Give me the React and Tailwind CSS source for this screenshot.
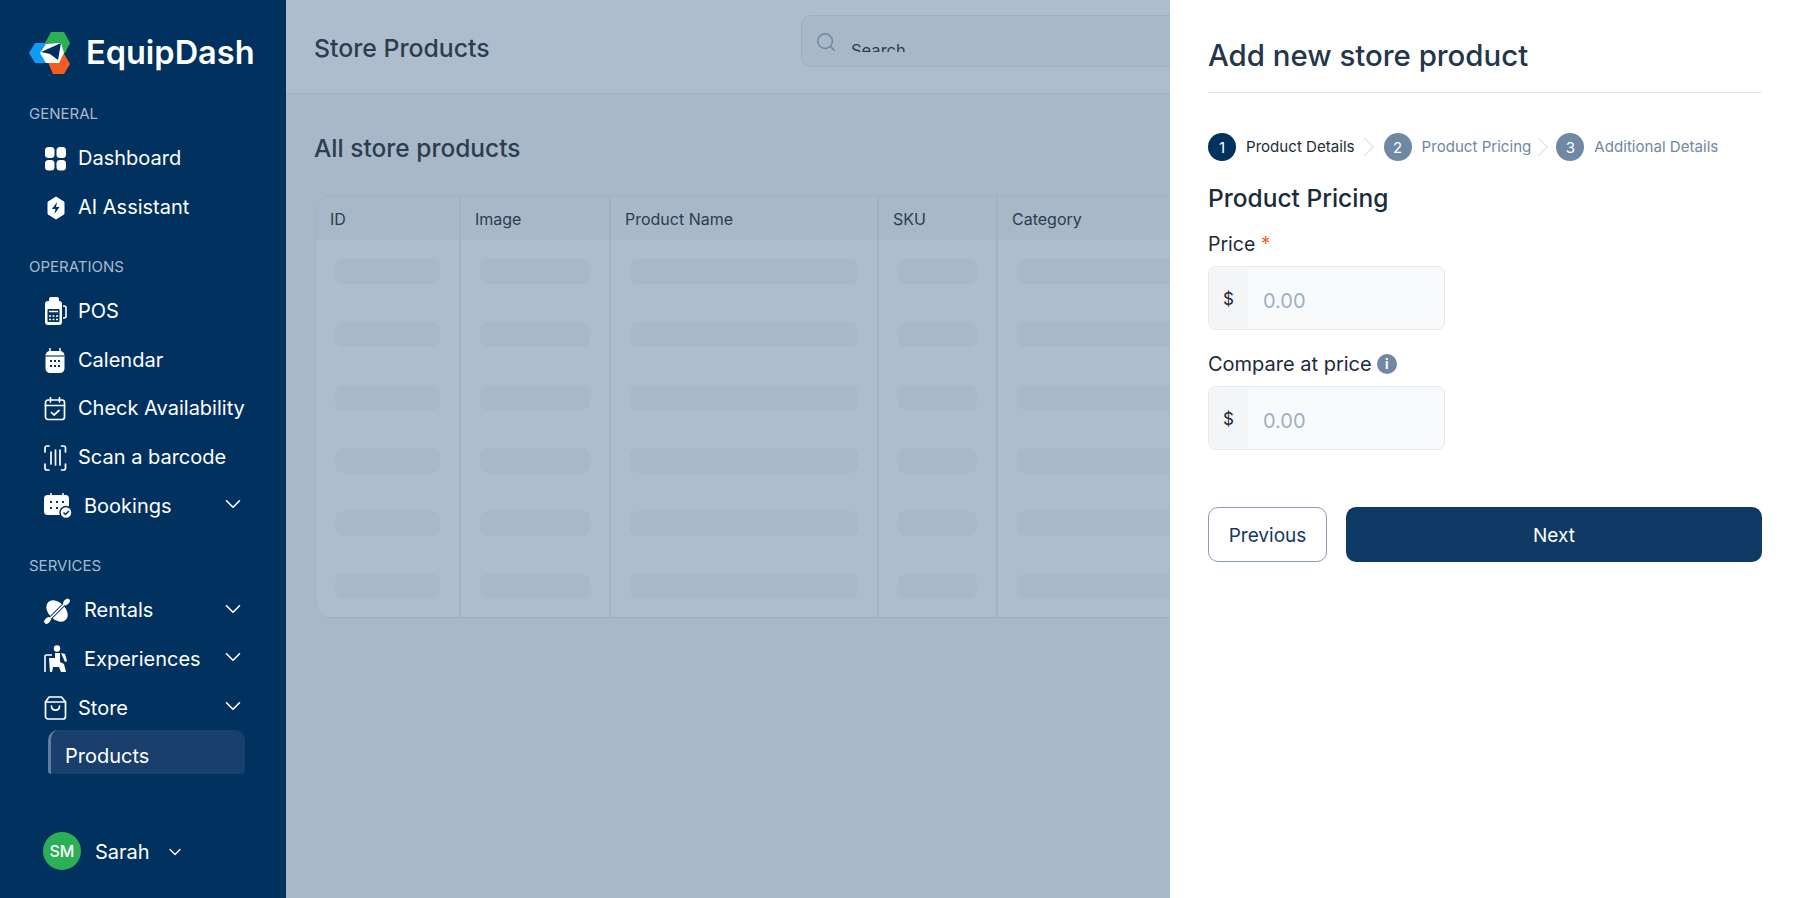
import React from "react";
import { ChevronDown, ChevronRight, Search } from "lucide-react";

const COLS = "grid grid-cols-[145px_150px_268px_119px_320px]";
const HEADERS = ["ID", "Image", "Product Name", "SKU", "Category"];
const ROWS = [1, 2, 3, 4, 5, 6];

const Logo = () => (
  <svg width="42" height="42" viewBox="0 0 42 42">
    <polygon points="0,21 6,11 18,11 18,31 6,31" fill="#0d9cf5" />
    <polygon points="16,11 22,0 35,0 41,11 36,21 20,24" fill="#2bb055" />
    <polygon points="18,28 34,20 41,32 35,42 24,42" fill="#f75c23" />
    <polygon points="11,21 17,12 32,11 35,21 30,31 17,31" fill="#fff" />
    <polygon points="12,20 32,11 29,28 21,22" fill="#00315f" />
  </svg>
);

const DashboardIcon = () => (
  <svg width="24" height="24" viewBox="0 0 24 24" fill="#fff">
    <rect x="1" y="0" width="9.5" height="11" rx="3.5" />
    <rect x="12.5" y="0" width="9.5" height="11" rx="3.5" />
    <rect x="1" y="13" width="9.5" height="10.5" rx="3.5" />
    <rect x="12.5" y="13" width="9.5" height="10.5" rx="3.5" />
  </svg>
);

const AiIcon = () => (
  <svg width="24" height="24" viewBox="0 0 24 24">
    <polygon points="12,1 20,6 20,18 12,23 4,18 4,6" fill="#fff" stroke="#fff" strokeLinejoin="round" />
    <polygon points="13,6 8,13 11.5,13 10.5,18 15.5,11 12,11" fill="#00315f" />
  </svg>
);

const PosIcon = () => (
  <svg width="24" height="30" viewBox="0 0 24 30">
    <rect x="5" y="0" width="10" height="6" rx="2" fill="#fff" />
    <rect x="1" y="4" width="17" height="24" rx="3" fill="#fff" />
    <path d="M19 9h1a2 2 0 0 1 2 2v8a2 2 0 0 1-2 2h-1" fill="none" stroke="#fff" strokeWidth="1.6" />
    <rect x="3.5" y="12" width="12" height="13" rx="1" fill="#00315f" />
    <path d="M5 19h2M8.5 19h2M12 19h2M5 22.5h2M8.5 22.5h2M12 22.5h2M5 14.5h9" stroke="#fff" strokeWidth="1.3" />
  </svg>
);

const CalendarIcon = () => (
  <svg width="24" height="26" viewBox="0 0 24 26">
    <path d="M6 0.5v4M16 0.5v4" stroke="#fff" strokeWidth="1.5" strokeLinecap="round" />
    <path d="M6 3h10a4.5 4.5 0 0 1 4.5 4.5v13a4.5 4.5 0 0 1-4.5 4.5H6a4.5 4.5 0 0 1-4.5-4.5v-13A4.5 4.5 0 0 1 6 3z" fill="#fff" />
    <path d="M1.5 8h19" stroke="#00315f" strokeWidth="1.1" />
    <g fill="#00315f">
      <rect x="6" y="12" width="2" height="2" /><rect x="10" y="12" width="2" height="2" /><rect x="14" y="12" width="2" height="2" />
      <rect x="6" y="17" width="2" height="2" /><rect x="10" y="17" width="2" height="2" /><rect x="14" y="17" width="2" height="2" />
    </g>
  </svg>
);

const CheckIcon = () => (
  <svg width="24" height="24" viewBox="0 0 24 24" fill="none" stroke="#fff" strokeWidth="1.7" strokeLinecap="round" strokeLinejoin="round">
    <rect x="1.5" y="3" width="19" height="19.5" rx="2.5" />
    <path d="M6.5 0.8v4M15.5 0.8v4M1.5 8.5h19M7.5 15.5l2.5 2.5 5-4.5" />
  </svg>
);

const ScanIcon = () => (
  <svg width="24" height="26" viewBox="0 0 24 26" fill="none" stroke="#fff" strokeWidth="1.7" strokeLinecap="round" strokeLinejoin="round">
    <path d="M5 1H3a2 2 0 0 0-2 2v4M17.5 1h2a2 2 0 0 1 2 2v4M5 25H3a2 2 0 0 1-2-2v-4M17.5 25h2a2 2 0 0 0 2-2v-4" />
    <path d="M7 7v12M11.5 5v15M16 5v15" />
  </svg>
);

const BookingsIcon = () => (
  <svg width="28" height="26" viewBox="0 0 28 26">
    <path d="M7 0v4M19 0v4" stroke="#fff" strokeWidth="1.5" />
    <rect x="0" y="2" width="25" height="20" rx="3.5" fill="#fff" />
    <g fill="#00315f">
      <rect x="6" y="8" width="2" height="2" /><rect x="12" y="8" width="2" height="2" /><rect x="18" y="8" width="2" height="2" />
      <rect x="6" y="14" width="2" height="2" /><rect x="12" y="14" width="2" height="2" />
    </g>
    <circle cx="22" cy="19.5" r="6" fill="#fff" stroke="#00315f" strokeWidth="1.5" />
    <path d="M19.5 19.5l2 2 3.5-3.5" fill="none" stroke="#00315f" strokeWidth="1.5" />
  </svg>
);

const RentalsIcon = () => (
  <svg width="26" height="26" viewBox="0 0 26 26">
    <ellipse cx="13" cy="13" rx="12.5" ry="8.5" fill="#fff" transform="rotate(45 13 13)" />
    <path d="M5 21.5L21.5 5" stroke="#00315f" strokeWidth="3.4" />
    <path d="M3 23.5L23 3.5" stroke="#fff" strokeWidth="1.7" />
    <ellipse cx="22.5" cy="4" rx="2.6" ry="3.8" fill="#fff" transform="rotate(45 22.5 4)" />
    <ellipse cx="3.5" cy="22.5" rx="2.6" ry="3.8" fill="#fff" transform="rotate(45 3.5 22.5)" />
  </svg>
);

const ExperiencesIcon = () => (
  <svg width="24" height="28" viewBox="0 0 24 28">
    <circle cx="13" cy="3.5" r="3.2" fill="#fff" />
    <path d="M1 27V11.5A1.5 1.5 0 0 1 2.5 10H8" fill="none" stroke="#fff" strokeWidth="1.6" />
    <path d="M5 13h6V8h5v9l4 2 2 8h-5l-2-5H9l-1 5H6z" fill="#fff" />
    <path d="M17 8l4 1 2 7-2 1z" fill="#fff" />
    <path d="M16.5 8v9" stroke="#00315f" strokeWidth="1" />
  </svg>
);

const StoreIcon = () => (
  <svg width="24" height="24" viewBox="0 0 24 24" fill="none" stroke="#fff" strokeWidth="1.7" strokeLinecap="round" strokeLinejoin="round">
    <path d="M5 1h12.5l4 5v14.5a2.5 2.5 0 0 1-2.5 2.5H4a2.5 2.5 0 0 1-2.5-2.5V6z" />
    <path d="M1.5 6h20M7.5 10c0 5.5 8 5.5 8 0" />
  </svg>
);

const NavItem = ({ icon, label, labelClass = "ml-[10px] pb-[2px]", arrow }) => (
  <div className="flex items-center h-[48.5px] pl-[44px] w-[246px] text-[20px] text-white">
    <div className="w-[24px] flex justify-start shrink-0 [&>svg]:shrink-0">{icon}</div>
    <span className={labelClass}>{label}</span>
    {arrow && <ChevronDown size={26} strokeWidth={1.5} className="ml-auto -mt-[4px]" />}
  </div>
);

const SectionLabel = ({ text, className }) => (
  <div className={`h-5 mb-[11px] pl-[29px] text-[15px] leading-5 text-[#aab9ca] ${className}`}>{text}</div>
);

const Sidebar = () => (
  <aside className="w-[286px] shrink-0 h-full bg-[#00315f] flex flex-col">
    <div className="flex items-center gap-[15px] pl-[29px] pt-[32px] h-[74px]">
      <Logo />
      <span className="text-[32.5px] font-semibold text-white leading-none">EquipDash</span>
    </div>
    <SectionLabel text="GENERAL" className="mt-[30px]" />
    <NavItem icon={<DashboardIcon />} label="Dashboard" />
    <NavItem icon={<AiIcon />} label="AI Assistant" />
    <SectionLabel text="OPERATIONS" className="mt-[25px]" />
    <NavItem icon={<PosIcon />} label="POS" />
    <NavItem icon={<CalendarIcon />} label="Calendar" />
    <NavItem icon={<CheckIcon />} label="Check Availability" />
    <NavItem icon={<ScanIcon />} label="Scan a barcode" />
    <NavItem icon={<BookingsIcon />} label="Bookings" labelClass="ml-[16px] pb-[1px]" arrow />
    <SectionLabel text="SERVICES" className="mt-[25px]" />
    <NavItem icon={<RentalsIcon />} label="Rentals" labelClass="ml-[16px] pb-[2px]" arrow />
    <NavItem icon={<ExperiencesIcon />} label="Experiences" labelClass="ml-[16px]" arrow />
    <NavItem icon={<StoreIcon />} label="Store" labelClass="ml-[10px]" arrow />
    <div className="-mt-[2px] ml-[48px] w-[197px] h-[44px] flex items-center pl-[14px] pt-[8px] bg-[#1a3f6c] rounded-t-[10px] rounded-b-[3px] border-l-[3px] border-[#5f7d9d] text-[20px] text-white">
      Products
    </div>
    <div className="mt-auto mb-[28px] ml-[43px] flex items-center">
      <div className="w-[38px] h-[38px] rounded-full bg-[#2bb055] flex items-center justify-center text-white text-[16px] font-medium">SM</div>
      <span className="ml-[14px] pt-[2px] text-[20px] text-white">Sarah</span>
      <ChevronDown size={20} strokeWidth={1.5} className="ml-[15px] mt-[2px] text-white" />
    </div>
  </aside>
);

const Main = () => (
  <main className="flex-1 min-w-0 h-full overflow-hidden bg-[#a8b8c8] text-[#2b3d4f]">
    <header className="h-[94px] bg-[#aebdce] border-b border-[#9fb1c4] flex items-center pl-[28px]">
      <h1 className="w-[487px] pt-[5px] text-[24.8px] font-medium">Store Products</h1>
      <div className="mb-[11px] w-[700px] h-[52px] shrink-0 rounded-[10px] border border-[#9bafc4] bg-[#a8b8c8] flex items-start pl-[13px]">
        <Search size={22} strokeWidth={1.6} className="text-[#6d87a3] mt-[15px]" />
        <div className="ml-[14px] h-[36px] overflow-hidden text-[16.5px] leading-5 pt-[24px] text-[#2b3d4f]">Search</div>
      </div>
    </header>
    <div className="pl-[29px]">
      <h2 className="-ml-[1px] mt-[37px] h-[34px] text-[24.5px] leading-[34px] font-medium">All store products</h2>
      <div className="mt-[30px] w-[1100px] h-[423px] rounded-l-[16px] border border-[#9fb1c4] overflow-hidden bg-[#aebdce]">
        <div className={`${COLS} h-[44px] bg-[#a8b8c8]`}>
          {HEADERS.map((h) => (
            <div key={h} className="flex items-center px-[14px] pt-[2px] border-r-2 border-[#9fb1c4] text-[16px]">{h}</div>
          ))}
        </div>
        {ROWS.map((r) => (
          <div key={r} className={`${COLS} h-[63px]`}>
            {HEADERS.map((h) => (
              <div key={h} className="px-[19px] pt-[19px] border-r-2 border-[#a1b2c5]">
                <div className="h-[25px] rounded-[8px] bg-[#a8b8c8]" />
              </div>
            ))}
          </div>
        ))}
      </div>
    </div>
  </main>
);

const Step = ({ n, label, active }) => (
  <div className="flex items-center gap-[10px]">
    <div className={`w-[28px] h-[28px] rounded-full flex items-center justify-center text-white text-[15px] pt-[2px] ${active ? "bg-[#00315f]" : "bg-[#6f88a3]"}`}>{n}</div>
    <span className={`text-[15.1px] ${active ? "text-[#1c2b3a]" : "text-[#6f88a3]"}`}>{label}</span>
  </div>
);

const PriceInput = () => (
  <div className="w-[237px] h-[64px] rounded-[8px] border border-[#e5e9ee] bg-[#f9fafb] flex overflow-hidden">
    <div className="w-[39px] bg-[#f3f5f7] flex items-center justify-center text-[17px] text-[#1c2b3a] pt-[3px]">$</div>
    <div className="ml-[15px] flex items-center text-[20px] text-[#9db0c4] pt-[6px]">0.00</div>
  </div>
);

const Panel = () => (
  <section className="absolute top-0 right-0 w-[630px] h-full bg-white px-[38px] text-[#1c2b3a]">
    <h2 className="h-[93px] pt-[36px] border-b border-[#dfe5ea] text-[29.4px] leading-[40px] font-medium text-[#24374a]">Add new store product</h2>
    <div className="mt-[37px] flex items-center">
      <Step n="1" label="Product Details" active />
      <ChevronRight size={34} strokeWidth={0.8} className="text-[#dfe5ea] -ml-[3px] -mr-[2px]" />
      <Step n="2" label="Product Pricing" />
      <ChevronRight size={34} strokeWidth={0.8} className="text-[#dfe5ea] -ml-[5px] -mr-[4px]" />
      <Step n="3" label="Additional Details" />
    </div>
    <h3 className="mt-[17px] h-[34px] text-[24.5px] leading-[34px] font-medium">Product Pricing</h3>
    <div className="mt-[15px] h-[36px] text-[19.5px] leading-7">
      Price <span className="text-[#f75c23]">*</span>
    </div>
    <PriceInput />
    <div className="mt-[20px] mb-[8px] h-[28px] flex items-center gap-[5px] text-[20px] leading-7">
      Compare at price
      <span className="w-[20px] h-[20px] rounded-full bg-[#6f88a3] text-white text-[13px] font-bold flex items-center justify-center">i</span>
    </div>
    <PriceInput />
    <div className="mt-[57px] flex gap-[19px] text-[19px]">
      <button className="w-[119px] h-[55px] pt-[3px] rounded-[10px] border border-[#8a9db3] text-[#0f3a65]">Previous</button>
      <button className="flex-1 h-[55px] pt-[3px] rounded-[10px] bg-[#0f3a65] text-white">Next</button>
    </div>
  </section>
);

const App = () => (
  <div className="relative flex w-full h-screen overflow-hidden font-['Inter','Liberation_Sans',sans-serif]">
    <Sidebar />
    <Main />
    <Panel />
  </div>
);

export default App;
